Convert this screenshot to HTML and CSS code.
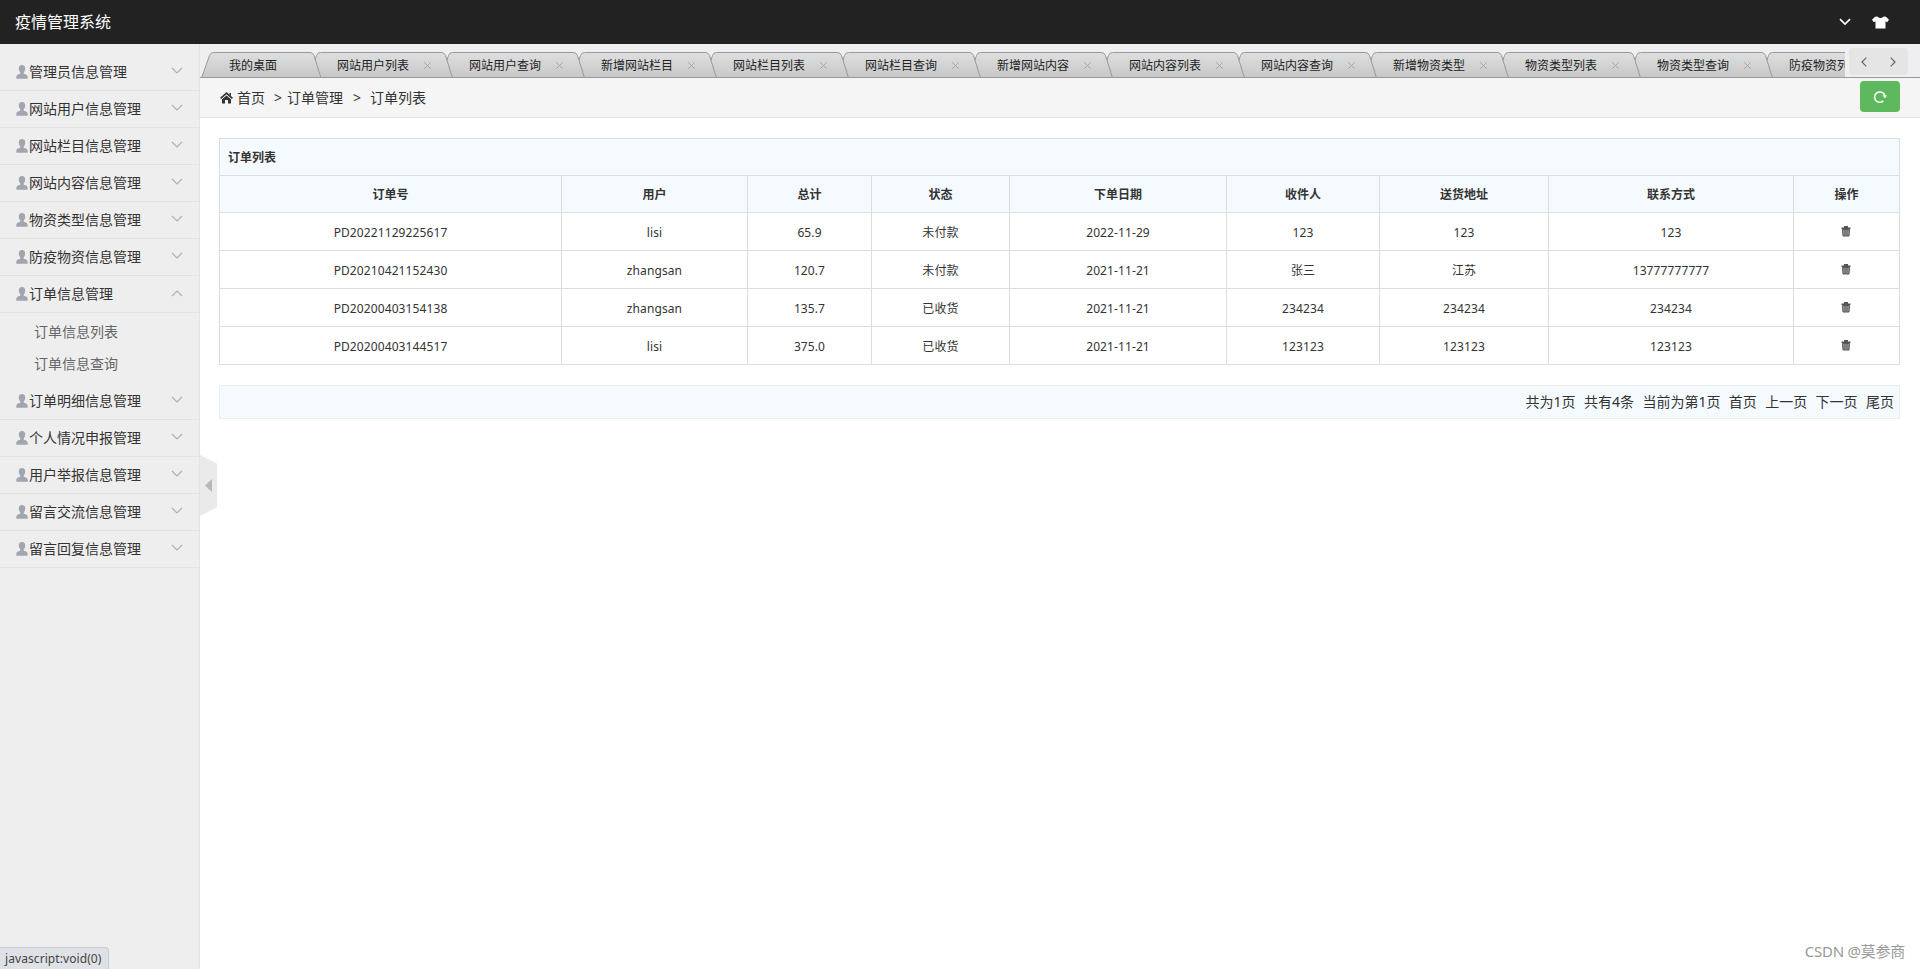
FILE: index.html
```html
<!DOCTYPE html>
<html lang="zh-CN">
<head>
<meta charset="utf-8">
<title>疫情管理系统</title>
<link rel="stylesheet" href="styles.css">
</head>
<body>
<svg class="defs" width="0" height="0">
  <symbol id="user" viewBox="0 0 12 14"><path fill="#a0a5af" d="M6 0C3.8 0 2.8 1.5 2.8 3.5 2.8 5 3.3 6.4 4.3 7.4V8.7C2 9.2.3 9.8.3 12.2V13.2Q.3 13.8 1 13.8H11Q11.7 13.8 11.7 13.2V12.2C11.7 9.8 10 9.2 7.7 8.7V7.4C8.7 6.4 9.2 5 9.2 3.5 9.2 1.5 8.2 0 6 0Z"/></symbol>
  <symbol id="down" viewBox="0 0 12 8"><path fill="none" stroke="#b0b0b0" stroke-width="1.2" d="M1 1 6 6 11 1"/></symbol>
  <symbol id="trash" viewBox="0 0 10 11"><path fill="#555" d="M3 0H7V1.500H9.500V3H.5V1.500H3Z"/><path fill="#999" stroke="#555" d="M1.500 3.500H8.500L8 10H2Z"/><path stroke="#555" stroke-width=".8" d="M4 4V9.500M6 4V9.500"/></symbol>
  <symbol id="tab-first" viewBox="0 0 120 26"><path fill="url(#g)" stroke="#999" d="M.5 26 8.500 3.500Q9.800.5 12.500.5H109Q112 .5 113 3.500L120 26"/></symbol>
  <symbol id="tab" viewBox="0 0 144 26"><path fill="url(#g)" stroke="#999" d="M0 26 7.500 3.500Q8.500.5 11.500.5H132Q135.500.5 136.500 3.500L143.500 26"/></symbol>
  <linearGradient id="g" x1="0" y1="0" x2="0" y2="1"><stop offset="0" stop-color="#dedfdf"/><stop offset="1" stop-color="#c7c7c8"/></linearGradient>
</svg>
<header class="top">
  <h1>疫情管理系统</h1>
  <div class="tools">
    <svg width="12" height="8" viewBox="0 0 12 8"><path d="M1 1.200 6 6 11 1.200" fill="none" stroke="#fff" stroke-width="1.700"/></svg>
    <svg width="17" height="13" viewBox="0 0 17 13"><path fill="#fff" d="M5.300.5Q8.500 3.500 11.700.5L14 .8 17 3.700 15.200 6.300 13.500 5.300V12.500H3.500V5.300L1.800 6.300 0 3.700 3 .8Z"/></svg>
  </div>
</header>
<div class="body">
  <aside class="side" id="side"></aside>
  <main class="main">
    <div class="tabbar">
      <div class="tabs" id="tabs"></div>
      <div class="nav">
        <svg width="6" height="10" viewBox="0 0 6 10"><path d="M5.300.7 1 5 5.300 9.300" fill="none" stroke="#666" stroke-width="1.200"/></svg>
        <svg width="6" height="10" viewBox="0 0 6 10"><path d="M.7.7 5 5 .7 9.300" fill="none" stroke="#666" stroke-width="1.200"/></svg>
      </div>
    </div>
    <nav class="crumbs">
      <svg width="13" height="12" viewBox="0 0 13 12"><path d="M.6 6.400 6.500 1.200 12.400 6.400" fill="none" stroke="#333" stroke-width="1.700"/><path d="M6.500 3.500 11 7.300V11.500H8V8H5V11.500H2V7.300ZM9.500 1H11V4L9.500 2.800Z" fill="#333"/></svg>
      <span class="c1">首页</span><span class="gt1">&gt;</span><span>订单管理</span><span class="gt2">&gt;</span><span>订单列表</span>
      <button class="refresh"><svg width="14" height="14" viewBox="0 0 14 14"><path d="M10.400 10.900A5.200 5.200 0 1 1 12 6.500" fill="none" stroke="#fff" stroke-width="1.500"/><path d="M9.500 5.500H14L12 8.300Z" fill="#fff"/></svg></button>
    </nav>
    <section class="content">
      <table class="orders">
        <colgroup><col class="w1"><col class="w2"><col class="w3"><col class="w4"><col class="w5"><col class="w6"><col class="w7"><col class="w8"><col></colgroup>
        <thead>
          <tr><th colspan="9" class="title">订单列表</th></tr>
          <tr><th>订单号</th><th>用户</th><th>总计</th><th>状态</th><th>下单日期</th><th>收件人</th><th>送货地址</th><th>联系方式</th><th>操作</th></tr>
        </thead>
        <tbody id="rows"></tbody>
      </table>
      <div class="pager"><span>共为1页</span><span>共有4条</span><span>当前为第1页</span><span>首页</span><span>上一页</span><span>下一页</span><span>尾页</span></div>
    </section>
    <svg class="handle" width="17" height="61" viewBox="0 0 17 61"><path fill="#eaeaea" d="M0 0 17 8.500V52L0 61Z"/><path fill="#b8b8b8" d="M5 30.500 12 24V37Z"/></svg>
  </main>
</div>
<div class="status">javascript:void(0)</div>
<div class="mark">CSDN @莫参商</div>
<script src="app.js"></script>
</body>
</html>
```
FILE: styles.css
```css
* { box-sizing: border-box; }
html { height: 969px; overflow: hidden; }
body { margin: 0; height: 969px; overflow: hidden; background: #fff; color: #333; font: 14px/20px "Noto Sans", "Noto Sans CJK SC", sans-serif; }
svg { display: block; flex: none; }
.defs { position: absolute; }
.top { height: 44px; background: #222; display: flex; justify-content: space-between; padding: 0 31px 0 15px; }
.top h1 { margin: 0; font-size: 16px; font-weight: 400; line-height: 44px; color: #fff; }
.tools { display: flex; align-items: center; gap: 21px; }
.body { display: flex; height: 925px; }
.side { width: 200px; padding-top: 10px; background: #eee; border-right: 1px solid #e3e3e3; }
.item { display: flex; align-items: center; height: 37px; padding: 0 16px 0 16px; border-bottom: 1px solid #e2e2e2; }
.item .person { width: 12px; height: 14px; margin-right: 1px; }
.item .arrow { width: 12px; height: 8px; margin-left: auto; margin-top: -3px; }
.item.open .arrow { transform: scaleY(-1); }
.sub { padding: 3px 0 3px 34px; line-height: 32px; color: #666; }
.main { position: relative; flex: 1; min-width: 0; }
.tabbar { display: flex; height: 34px; background: #efeef0; border-bottom: 1px solid #999; padding-left: 1px; }
.tabs { display: flex; width: 1644px; overflow: hidden; padding-top: 8px; }
.tab { position: relative; isolation: isolate; flex: none; width: 144px; height: 26px; margin-left: -12px; padding: 1px 0 0 28px; font-size: 12px; line-height: 26px; color: #222; display: flex; align-items: center; }
.tab.first { width: 120px; margin-left: 0; }
.tab .shape { position: absolute; left: 0; top: 0; width: 100%; height: 26px; z-index: -1; }
.tab .x { margin-left: 15px; }
.nav { display: flex; align-items: center; justify-content: space-between; width: 59px; height: 27px; margin: 4px 0 0 4px; padding: 0 12px; border-radius: 4px; background: #e5e5e5; }
.crumbs { display: flex; align-items: center; height: 40px; padding: 0 20px 0 20px; background: #f5f5f5; border-bottom: 1px solid #e5e5e5; }
.c1 { margin-left: 4px; }
.gt1 { margin: 0 5px 0 9px; }
.gt2 { margin: 0 9px 0 10px; }
.refresh { width: 40px; height: 31px; margin: -2px 0 0 auto; padding: 0; border: 0; border-radius: 4px; background: #5eb95e; display: flex; align-items: center; justify-content: center; }
.content { padding: 20px 20px 0 19px; }
.orders { width: 1681px; table-layout: fixed; border-collapse: collapse; font-size: 12px; line-height: 20px; text-align: center; }
.orders th, .orders td { border: 1px solid #ddd; padding: 2px 8px 0; height: 38px; }
.orders td { letter-spacing: .1px; }
.orders th { height: 37px; background: #f5fafe; font-weight: 700; }
.orders .title { text-align: left; }
.orders svg { position: relative; left: -1px; margin: -3px auto 0; width: 10px; height: 11px; }
.w1 { width: 342px; }
.w2 { width: 186px; }
.w3 { width: 124px; }
.w4 { width: 138px; }
.w5 { width: 217px; }
.w6 { width: 153px; }
.w7 { width: 169px; }
.w8 { width: 245px; }
.pager { display: flex; justify-content: flex-end; align-items: center; gap: 8.4px; height: 34px; margin-top: 20px; padding-right: 5px; background: #f5fafe; border: 1px solid #eee; }
.handle { position: absolute; left: 0; top: 411px; }
.status { position: absolute; left: 0; top: 947px; width: 109px; height: 22px; padding-left: 5px; font-size: 12px; line-height: 22px; letter-spacing: .08px; color: #444; background: #dee1e6; border: solid #c8cbd0; border-width: 1px 1px 0 0; border-top-right-radius: 4px; white-space: nowrap; }
.mark { position: absolute; right: 15px; top: 941px; font-size: 15px; letter-spacing: -.25px; color: #999; }
```
FILE: app.js
```js
const use = (id, cls) => `<svg class="${cls}"><use href="#${id}"/></svg>`;
const menu = ['管理员信息管理', '网站用户信息管理', '网站栏目信息管理', '网站内容信息管理', '物资类型信息管理', '防疫物资信息管理', '订单信息管理', '订单明细信息管理', '个人情况申报管理', '用户举报信息管理', '留言交流信息管理', '留言回复信息管理'];
document.getElementById('side').innerHTML = menu.map((name, i) =>
  `<div class="item${i === 6 ? ' open' : ''}">${use('user', 'person')}<span>${name}</span>${use('down', 'arrow')}</div>` +
  (i === 6 ? '<div class="sub"><div>订单信息列表</div><div>订单信息查询</div></div>' : '')).join('');

const tabs = ['我的桌面', '网站用户列表', '网站用户查询', '新增网站栏目', '网站栏目列表', '网站栏目查询', '新增网站内容', '网站内容列表', '网站内容查询', '新增物资类型', '物资类型列表', '物资类型查询', '防疫物资列表'];
const close = '<svg class="x" width="7" height="7" viewBox="0 0 7 7"><path d="M.3.3 6.700 6.700M6.700.3.3 6.700" stroke="#a0a8b0"/></svg>';
document.getElementById('tabs').innerHTML = tabs.map((name, i) =>
  `<div class="tab${i ? '' : ' first'}" style="z-index:${20 - i}">${use(i ? 'tab' : 'tab-first', 'shape')}<span>${name}</span>${i ? close : ''}</div>`).join('');

const orders = [
  ['PD20221129225617', 'lisi', '65.9', '未付款', '2022-11-29', '123', '123', '123'],
  ['PD20210421152430', 'zhangsan', '120.7', '未付款', '2021-11-21', '张三', '江苏', '13777777777'],
  ['PD20200403154138', 'zhangsan', '135.7', '已收货', '2021-11-21', '234234', '234234', '234234'],
  ['PD20200403144517', 'lisi', '375.0', '已收货', '2021-11-21', '123123', '123123', '123123']
];
document.getElementById('rows').innerHTML = orders.map(r =>
  `<tr>${r.map(c => `<td>${c}</td>`).join('')}<td>${use('trash', 'bin')}</td></tr>`).join('');
```
